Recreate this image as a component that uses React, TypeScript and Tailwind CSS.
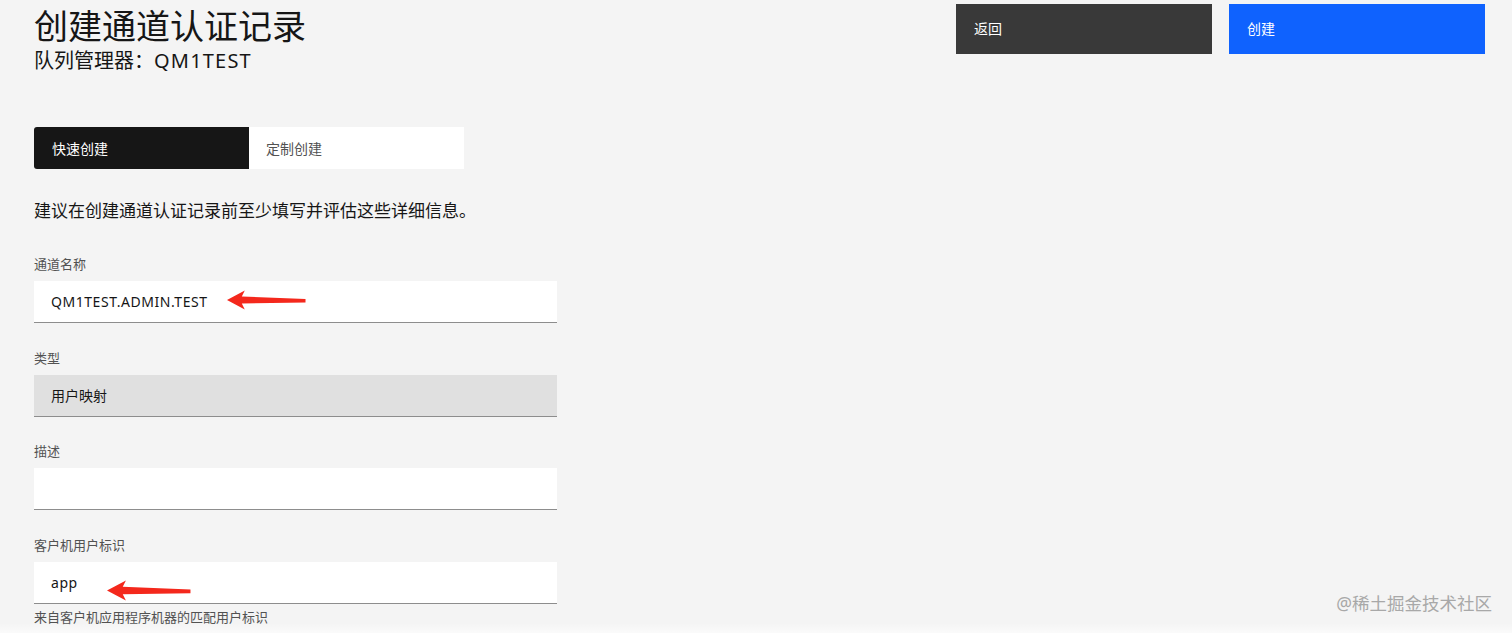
import React from 'react';

const FONT = '"Noto Sans", "Noto Sans CJK SC", sans-serif';

function RedArrow({ className }: { className: string }) {
  // Hand-drawn style left-pointing red arrow
  return (
    <svg className={className} viewBox="0 0 80 20" fill="none" preserveAspectRatio="none">
      <path d="M0 10 L18 0.5 L15 6.5 L79.5 9 L79.5 12.5 L15 13.5 L18 19.5 Z" fill="#f4281c" />
    </svg>
  );
}

type FieldProps = {
  label: string;
  value?: string;
  latin?: boolean;
  readOnly?: boolean;
  helper?: string;
  arrow?: string;
};

function Field({ label, value, latin, readOnly, helper, arrow }: FieldProps) {
  return (
    <div className="flex flex-col">
      <div className="text-[13px] leading-4 text-[#525252]">{label}</div>
      <div
        className={`relative mt-[9px] flex h-[42px] w-[523px] items-center border-b border-[#8d8d8d] px-[17px] text-[14px] text-[#161616] ${
          readOnly ? 'bg-[#e0e0e0]' : 'bg-white'
        }`}
      >
        <span className={latin ? 'tracking-[0.55px]' : ''}>{value}</span>
        {arrow && <RedArrow className={arrow} />}
      </div>
      {helper && <div className="mt-[5px] text-[13px] leading-4 text-[#525252]">{helper}</div>}
    </div>
  );
}

export default function App() {
  return (
    <div className="relative h-[633px] w-full overflow-hidden bg-[#f4f4f4]" style={{ fontFamily: FONT }}>
      {/* header */}
      <div className="flex justify-between">
        <div className="pl-[34px]">
          <h1 className="mt-[4px] text-[34px] leading-[44px] font-normal text-[#161616]">创建通道认证记录</h1>
          <p className="text-[20px] leading-[26px] text-[#161616]">
            队列管理器：<span className="tracking-[1.2px]">QM1TEST</span>
          </p>
        </div>
        <div className="flex gap-[17px] pt-[4px] pr-[27px]">
          <button className="flex h-[50px] w-[256px] items-center bg-[#393939] px-[18px] pb-[1px] text-[14px] text-white">
            返回
          </button>
          <button className="flex h-[50px] w-[256px] items-center bg-[#0f62fe] px-[18px] pb-[1px] text-[14px] text-white">
            创建
          </button>
        </div>
      </div>

      <div className="pl-[34px]">
        {/* tabs */}
        <div className="mt-[53px] flex h-[42px] w-[430px] text-[14px]">
          <div className="flex w-[215px] items-center rounded-l-[3px] bg-[#161616] px-[18px] text-white">快速创建</div>
          <div className="flex w-[215px] items-center bg-white px-[17px] text-[#525252]">定制创建</div>
        </div>

        <p className="mt-[30px] text-[17px] leading-6 text-[#161616]">
          建议在创建通道认证记录前至少填写并评估这些详细信息。
        </p>

        <div className="mt-[33px] flex flex-col gap-[26.67px]">
          <Field
            label="通道名称"
            value="QM1TEST.ADMIN.TEST"
            latin
            arrow="absolute left-[193px] top-[9px] h-[20px] w-[79px]"
          />
          <Field label="类型" value="用户映射" readOnly />
          <Field label="描述" />
          <Field
            label="客户机用户标识"
            value="app"
            latin
            helper="来自客户机应用程序机器的匹配用户标识"
            arrow="absolute left-[73px] top-[18px] h-[21px] w-[84px]"
          />
        </div>
      </div>

      <div className="absolute right-[20px] bottom-[17px] text-[17.5px] text-[#a8a8a8]">@稀土掘金技术社区</div>
      <div className="pointer-events-none absolute bottom-0 left-0 h-[10px] w-full bg-gradient-to-t from-white/60 to-transparent" />
    </div>
  );
}
